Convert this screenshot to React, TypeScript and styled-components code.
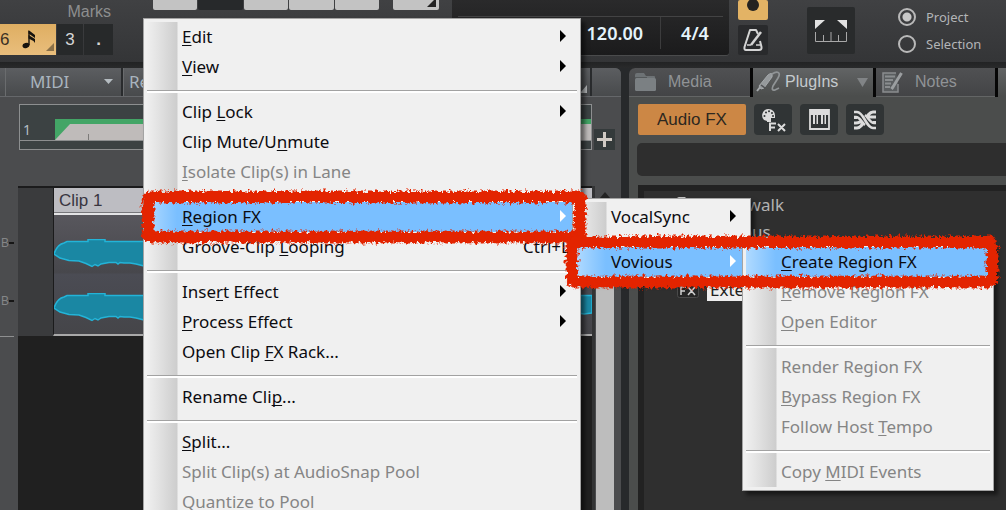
import React from "react";
import styled, { createGlobalStyle, css } from "styled-components";

const GlobalStyle = createGlobalStyle`
  *, *::before, *::after { box-sizing: border-box; }
  body { margin: 0; background: #27292b; font-family: "Noto Sans", "Open Sans", sans-serif; }
  button, input { font: inherit; margin: 0; padding: 0; border: 0; }
  ul { list-style: none; margin: 0; padding: 0; }
  svg { display: block; flex: none; }
`;

const sans = css`font-family: "Liberation Sans", Arial, sans-serif;`;

const Shell = styled.div`
  position: relative;
  display: flex;
  flex-direction: column;
  height: 100vh;
  overflow: hidden;
  background: #27292b;
`;

/* ---------- control bar ---------- */

const ControlBar = styled.header`
  display: flex;
  align-items: flex-start;
  flex: none;
  height: 68px;
  overflow: hidden;
  background: linear-gradient(#404143, #343537 62px, #222324 62px, #292a2b);
`;

const SnapGroup = styled.div`
  flex: none;
  width: 113px;
  margin-right: 40px;
`;

const SnapLabel = styled.div`
  ${sans}
  height: 24px;
  padding-right: 2px;
  font-size: 16px;
  line-height: 24px;
  text-align: right;
  color: #8d8e8f;
`;

const SnapRow = styled.div`
  ${sans}
  display: flex;
  gap: 1px;
  height: 31px;
  font-size: 17px;
`;

const SnapValue = styled.button`
  display: flex;
  align-items: center;
  gap: 13px;
  position: relative;
  width: 56px;
  background: linear-gradient(#dfae62, #e9be7c);
  color: #3a3024;
  text-align: left;
`;

const SnapCorner = styled.svg`
  position: absolute;
  right: 2px;
  bottom: 4px;
`;

const SnapCell = styled.button<{ $width: number; $bold?: boolean }>`
  width: ${(p) => p.$width}px;
  background: #27292a;
  color: #d6d6d6;
  font-weight: ${(p) => (p.$bold ? 700 : 400)};
`;

const ToolStrip = styled.div`
  display: flex;
  flex: none;
  gap: 1px;
  width: 226px;
  height: 10px;
  margin-right: 14px;
`;

const ToolButton = styled.button<{ $off?: boolean }>`
  flex: 1;
  border-radius: 0 0 2px 2px;
  background: ${(p) => (p.$off ? "#27292b" : "#c3c3c3")};
`;

const CornerButton = styled.button`
  display: flex;
  justify-content: flex-end;
  flex: none;
  width: 46px;
  height: 10px;
  margin-right: 13px;
  padding-right: 3px;
  border-radius: 0 0 2px 2px;
  background: #c3c3c3;
`;

const Transport = styled.div`
  flex: none;
  width: 277px;
  height: 55px;
  margin-right: 9px;
  padding: 16px 6px 6px;
  border-radius: 0 0 3px 3px;
  background: linear-gradient(#2a2a2b, #1b1b1c);
  box-shadow: 0 1px 0 #4a4b4c;
`;

const TransportReadout = styled.div`
  display: flex;
  justify-content: flex-end;
  height: 33px;
  border-top: 1px solid #434344;
  color: #e4f3fb;
  font-size: 18px;
  font-weight: 600;
  line-height: 32px;
`;

const Tempo = styled.span`
  padding-right: 17px;
  border-right: 1px solid #3c3c3d;
`;

const Meter = styled.span`
  width: 62px;
  padding-left: 6px;
  text-align: center;
`;

const ButtonColumn = styled.div`
  display: flex;
  flex-direction: column;
  flex: none;
  gap: 5px;
  width: 30px;
  margin-right: 39px;
`;

const SmallButton = styled.button<{ $lit?: boolean }>`
  display: flex;
  justify-content: center;
  align-items: ${(p) => (p.$lit ? "flex-start" : "center")};
  height: ${(p) => (p.$lit ? 20 : 30)}px;
  border-radius: 2px;
  background: ${(p) => (p.$lit ? "#e3b365" : "#292a2c")};
`;

const RulerButton = styled.button`
  display: flex;
  align-items: center;
  justify-content: center;
  flex: none;
  width: 48px;
  height: 47px;
  margin: 7px 43px 0 0;
  border-radius: 2px;
  background: #292b2c;
`;

const RadioGroup = styled.div`
  display: flex;
  flex-direction: column;
  gap: 3px;
  padding-top: 5px;
`;

const RadioLabel = styled.label`
  display: flex;
  align-items: center;
  gap: 10px;
  height: 24px;
  color: #b3b5b7;
  font-size: 13px;
`;

const Radio = styled.input`
  appearance: none;
  width: 18px;
  height: 18px;
  border: 2px solid #b9b9b9;
  border-radius: 50%;
  &:checked { background: radial-gradient(circle, #c8c8c8 4px, transparent 5px); }
`;

/* ---------- work area ---------- */

const Work = styled.div`
  display: flex;
  flex: 1;
  gap: 8px;
  min-height: 0;
`;

const TracksPanel = styled.main`
  display: flex;
  flex: 1;
  flex-direction: column;
  min-width: 0;
  border-radius: 0 6px 0 0;
  background: #4b4c4e;
  overflow: hidden;
`;

const MenuBar = styled.nav`
  display: flex;
  flex: none;
  height: 29px;
  padding-left: 5px;
  border-bottom: 1px solid #65676a;
  background: linear-gradient(#5c5e61, #484a4c);
`;

const MenuTab = styled.button<{ $grow?: boolean }>`
  display: flex;
  align-items: center;
  justify-content: space-between;
  width: ${(p) => (p.$grow ? "auto" : "118px")};
  flex: ${(p) => (p.$grow ? "1" : "none")};
  margin-right: ${(p) => (p.$grow ? 29 : 0)}px;
  padding: ${(p) => (p.$grow ? "0 3px 2px 6px" : "0 8px 2px 25px")};
  border-right: 2px solid #292b2d;
  box-shadow: inset 1px 0 #6a6c6e;
  background: transparent;
  color: #a9b4be;
  font-size: 17px;
`;

const TimelineRow = styled.div`
  display: flex;
  align-items: flex-end;
  flex: none;
  gap: 2px;
  height: 89px;
  padding: 7px 6px 36px 19px;
`;

const Timeline = styled.div`
  display: flex;
  flex: 1;
  height: 46px;
  padding: 14px 0 8px;
  border: 1px solid #8d8f90;
  background: #3c4243;
`;

const BarNumber = styled.span`
  width: 35px;
  padding-left: 3px;
  border-bottom: 1px solid #8d8f90;
  color: #b4bdc2;
  font-size: 14px;
  line-height: 22px;
`;

const LoopRange = styled.div`
  flex: 1;
  background: #bfbbba;
  border-top: 5px solid #43a566;
  border-bottom: 1px solid #8d8f90;
`;

const AddButton = styled.button`
  display: flex;
  align-items: center;
  justify-content: center;
  width: 21px;
  height: 21px;
  background: #343a3b;
`;

const TrackArea = styled.div`
  display: flex;
  flex: 1;
  min-height: 0;
`;

const DbScale = styled.div`
  ${sans}
  width: 18px;
  height: 151px;
  padding-top: 48px;
  color: #858688;
  font-size: 12px;
`;

const DbMark = styled.div`
  display: flex;
  align-items: center;
  justify-content: flex-end;
  height: 18px;
  margin-bottom: 40px;
  padding-right: 4px;
  &::after { content: ""; width: 5px; height: 2px; background: #161616; }
`;

const ScaleLine = styled.hr`
  width: 14px;
  height: 1px;
  margin: -14px 0 0;
  border: 0;
  background: #8e8f90;
`;

const Lanes = styled.div`
  flex: 1;
  min-width: 0;
  border-top: 2px solid #1b1b1c;
  background: #202020;
`;

const Lane = styled.div`
  display: flex;
  height: 148px;
  padding-left: 35px;
  background: #3a3b3d;
`;

const Clip = styled.article`
  flex: 1;
  min-width: 0;
  border-left: 1px solid #1b1b1c;
  border-bottom: 2px solid #a9a9a9;
`;

const ClipTitle = styled.h3`
  ${sans}
  height: 27px;
  margin: 0;
  padding-left: 5px;
  border-bottom: 2px solid #e4e4e6;
  background: #bdbdc2;
  box-shadow: inset 0 -1px #77777b;
  color: #39353f;
  font-size: 17px;
  font-weight: 400;
  line-height: 25px;
`;

const ClipBody = styled.div`
  display: flex;
  flex-direction: column;
  gap: 25px;
  height: 119px;
  padding-top: 24px;
  background: linear-gradient(#58575d, #47474c 58px, #4b4c54 59px, #454549);
`;

const ScrollBar = styled.div`
  display: flex;
  flex-direction: column;
  align-items: center;
  width: 29px;
  padding: 6px 7px 0 4px;
  gap: 6px;
  box-shadow: inset 3px 0 #333435;
`;

const ScrollThumb = styled.div`
  flex: 1;
  width: 18px;
  background: #bdbdbd;
`;

/* ---------- browser panel ---------- */

const Browser = styled.aside`
  display: flex;
  flex: none;
  flex-direction: column;
  width: 377px;
  border-radius: 6px 0 0 0;
  background: #4b4d4c;
  overflow: hidden;
`;

const BrowserTabs = styled.nav`
  display: flex;
  flex: none;
  gap: 3px;
  height: 29px;
  background: #060606;
`;

const BrowserTab = styled.button<{ $active?: boolean; $width: number }>`
  ${sans}
  display: flex;
  align-items: center;
  flex: none;
  width: ${(p) => p.$width}px;
  padding-left: ${(p) => (p.$active ? 3 : 6)}px;
  gap: ${(p) => (p.$active ? 4 : 12)}px;
  border-bottom: 1px solid ${(p) => (p.$active ? "#4b4d4c" : "#636565")};
  background: ${(p) => (p.$active ? "linear-gradient(#626465, #4b4d4c)" : "linear-gradient(#505153, #434446)")};
  color: ${(p) => (p.$active ? "#c5cacd" : "#909396")};
  font-size: 16px;
`;

const TabArrow = styled.svg`
  margin-left: 15px;
`;

const FilterRow = styled.div`
  display: flex;
  flex: none;
  gap: 8px;
  padding: 7px 9px 8px;
`;

const FilterButton = styled.button<{ $on?: boolean }>`
  ${sans}
  display: flex;
  align-items: center;
  justify-content: center;
  width: ${(p) => (p.$on ? 108 : 38)}px;
  height: 31px;
  border-radius: ${(p) => (p.$on ? 2 : 4)}px;
  background: ${(p) => (p.$on ? "#cc8745" : "#303435")};
  color: #2d2720;
  font-size: 17px;
`;

const SearchBox = styled.input`
  flex: none;
  height: 33px;
  margin: 0 0 9px 8px;
  border-radius: 5px 0 0 5px;
  background: #2e2e2e;
  color: #c0c0c0;
  outline: none;
`;

const Tree = styled.ul`
  flex: 1;
  margin-left: 9px;
  padding-left: 33px;
  border: solid #222222;
  border-width: 6px 0 0 6px;
  background: #2f2f2f;
  color: #b2b2b2;
  font-size: 17px;
`;

const TreeItem = styled.li<{ $after?: number }>`
  display: flex;
  align-items: center;
  gap: 8px;
  height: 27px;
  margin-bottom: ${(p) => p.$after ?? 0}px;
`;

const TreeText = styled.span<{ $selected?: boolean }>`
  padding: 0 3px;
  line-height: 22px;
  background: ${(p) => (p.$selected ? "#efefef" : "transparent")};
  color: ${(p) => (p.$selected ? "#222222" : "inherit")};
`;

/* ---------- context menus ---------- */

const Menu = styled.ul<{ $x: number; $y: number; $width: number }>`
  position: absolute;
  left: ${(p) => p.$x}px;
  top: ${(p) => p.$y}px;
  width: ${(p) => p.$width}px;
  padding: 3px;
  border: 1px solid #a3a3a3;
  background: #f0f0f0;
  box-shadow: 4px 4px 4px rgba(0, 0, 0, 0.5);
`;

const gutter = css`
  background: linear-gradient(90deg, #efefef, #e2e2e2 12px, #cdcdcd 30px, #f0f0f0 31px);
`;

const MenuRow = styled.button<{ $hot?: boolean }>`
  display: flex;
  align-items: center;
  width: 100%;
  height: 30px;
  padding: 0 11px 0 35px;
  ${gutter}
  ${(p) => p.$hot && css`background: linear-gradient(90deg, #b0daff, #7abfff 30px);`}
  color: #0c0c10;
  font-size: 17px;
  line-height: 24px;
  white-space: nowrap;
  text-align: left;
  &:disabled { color: #858585; }
  u { text-decoration-thickness: 1px; text-underline-offset: 2px; text-decoration-skip-ink: none; }
`;

const RowText = styled.span`
  flex: 1;
`;

const Shortcut = styled.span`
  width: 43px;
`;

const RowArrow = styled.svg`
  margin-bottom: 2px;
`;

const Separator = styled.li`
  height: 15px;
  padding-top: 8px;
  ${gutter}
  &::before {
    content: "";
    display: block;
    height: 3px;
    border-top: 1px solid #a2a2a2;
    background: #ffffff;
  }
`;

const Scribble = styled.svg<{ $x: number; $y: number }>`
  position: absolute;
  left: ${(p) => p.$x}px;
  top: ${(p) => p.$y}px;
  overflow: visible;
  pointer-events: none;
`;

type Entry = { text: string; off?: boolean; sub?: boolean; hot?: boolean; keys?: string } | "-";

const clipMenu: Entry[] = [
  { text: "_Edit", sub: true },
  { text: "_View", sub: true },
  "-",
  { text: "Clip _Lock", sub: true },
  { text: "Clip Mute/U_nmute" },
  { text: "_Isolate Clip(s) in Lane", off: true },
  "-",
  { text: "_Region FX", sub: true, hot: true },
  { text: "Groove-Clip _Looping", keys: "Ctrl+L" },
  "-",
  { text: "Inse_rt Effect", sub: true },
  { text: "_Process Effect", sub: true },
  { text: "Open Clip _FX Rack..." },
  "-",
  { text: "Rename Cli_p..." },
  "-",
  { text: "_Split..." },
  { text: "Split Clip(s) at AudioSnap Pool", off: true },
  { text: "Quantize to Pool", off: true },
];

const regionMenu: Entry[] = [
  { text: "VocalSync", sub: true },
  "-",
  { text: "Vovious", sub: true, hot: true },
];

const voviousMenu: Entry[] = [
  { text: "_Create Region FX", hot: true },
  { text: "_Remove Region FX", off: true },
  { text: "_Open Editor", off: true },
  "-",
  { text: "Render Region FX", off: true },
  { text: "_Bypass Region FX", off: true },
  { text: "Follow Host _Tempo", off: true },
  "-",
  { text: "Copy _MIDI Events", off: true },
];

function Mnemonic({ text }: { text: string }) {
  const at = text.indexOf("_");
  if (at < 0) return <>{text}</>;
  return (
    <>
      {text.slice(0, at)}
      <u>{text[at + 1]}</u>
      {text.slice(at + 2)}
    </>
  );
}

function ContextMenu({ items, x, y, width }: { items: Entry[]; x: number; y: number; width: number }) {
  return (
    <Menu role="menu" $x={x} $y={y} $width={width}>
      {items.map((item, i) =>
        item === "-" ? (
          <Separator key={i} role="separator" />
        ) : (
          <li key={i} role="none">
            <MenuRow role="menuitem" disabled={item.off} $hot={item.hot}>
              <RowText><Mnemonic text={item.text} /></RowText>
              {item.keys && <Shortcut>{item.keys}</Shortcut>}
              {item.sub && (
                <RowArrow width="6" height="12"><path d="M0 0L6 6L0 12Z" fill={item.hot ? "#fff" : "#000"} /></RowArrow>
              )}
            </MenuRow>
          </li>
        )
      )}
    </Menu>
  );
}

function Outline({ x, y, width, height, seed }: { x: number; y: number; width: number; height: number; seed: number }) {
  const id = `chalk${seed}`;
  return (
    <Scribble $x={x} $y={y} width={width} height={height} aria-hidden="true">
      <defs>
        <filter
          id={id}
          x="-10"
          y="-10"
          width={width + 20}
          height={height + 20}
          filterUnits="userSpaceOnUse"
          colorInterpolationFilters="sRGB"
        >
          <feTurbulence type="fractalNoise" baseFrequency="0.3" numOctaves="3" seed={seed} result="n" />
          <feDisplacementMap in="SourceGraphic" in2="n" scale="7" xChannelSelector="R" yChannelSelector="G" />
        </filter>
      </defs>
      <g filter={`url(#${id})`} fill="none" stroke="#e32400">
        <rect x="6" y="6" width={width - 12} height={height - 12} rx="2" strokeWidth="10" />
        <rect x="6" y="6" width={width - 12} height={height - 12} rx="2" strokeWidth="13" strokeDasharray="3 2 1 2 4 3" />
      </g>
    </Scribble>
  );
}

function Wave() {
  const edge =
    "M0 15C2 9 5 5 10 4L13 2.500H34V.5H51V2.500H538V20L530 21L524 20L505 24H120L110 28L90 27L82 25L76 24H70L66 23.500L64 25L62 23.500H55L47 25L44 27L41 25.500L38 27.500L32 24.500L25 22L15 21.500L6 19Z";
  return (
    <svg width="100%" height="29" viewBox="0 0 538 29" preserveAspectRatio="none">
      <path d={edge} fill="#1a87a3" stroke="#23b4d8" strokeWidth="1.500" />
    </svg>
  );
}

export default function App() {
  return (
    <Shell>
      <GlobalStyle />
      <ControlBar>
        <SnapGroup>
          <SnapLabel>Marks</SnapLabel>
          <SnapRow>
            <SnapValue>
              6
              <svg width="14" height="19" viewBox="0 0 14 19">
                <ellipse cx="4" cy="15.500" rx="3.600" ry="2.500" fill="#17130e" transform="rotate(-18 4 15.500)" />
                <path d="M7 15V1" stroke="#17130e" strokeWidth="1.400" />
                <path d="M6.500 0L13 5V8L6.500 3.500ZM6.500 5L13 9V13L11.500 11L6.500 8.500Z" fill="#17130e" />
              </svg>
              <SnapCorner width="8" height="8"><path d="M8 0V8H0Z" fill="#8a7048" /></SnapCorner>
            </SnapValue>
            <SnapCell $width={26}>3</SnapCell>
            <SnapCell $width={29} $bold>.</SnapCell>
          </SnapRow>
        </SnapGroup>
        <ToolStrip>
          <ToolButton aria-label="Smart tool" />
          <ToolButton aria-label="Select tool" $off />
          <ToolButton aria-label="Move tool" />
          <ToolButton aria-label="Edit tool" />
          <ToolButton aria-label="Draw tool" />
        </ToolStrip>
        <CornerButton aria-label="Tool options">
          <svg width="9" height="7"><path d="M9 -2V7H0Z" fill="#222" /></svg>
        </CornerButton>
        <Transport>
          <TransportReadout>
            <Tempo>120.00</Tempo>
            <Meter>4/4</Meter>
          </TransportReadout>
        </Transport>
        <ButtonColumn>
          <SmallButton $lit aria-label="Record mode">
            <svg width="14" height="12"><circle cx="7" cy="5" r="6" fill="#242220" /></svg>
          </SmallButton>
          <SmallButton aria-label="Metronome">
            <svg width="20" height="24" viewBox="0 0 20 24" fill="none" stroke="#d4d4d4" strokeWidth="2" strokeLinejoin="round">
              <path d="M15 6L13 2H7L1.500 19Q1 22 3 22H16Q19 22 18.500 19L17 13" />
              <path d="M4 17H8M13 17H17" strokeWidth="1.500" />
              <path d="M8 17L18 4" strokeWidth="2.500" />
            </svg>
          </SmallButton>
        </ButtonColumn>
        <RulerButton aria-label="Loop range">
          <svg width="32" height="22" viewBox="0 0 32 22">
            <path d="M0 0H10L0 9ZM32 0H22L32 9Z" fill="#e2e2e2" />
            <path d="M.5 12V21.500H31.500V12M8.500 15V21M16 12V21M23.500 15V21" fill="none" stroke="#a8a8a8" />
          </svg>
        </RulerButton>
        <RadioGroup>
          <RadioLabel><Radio type="radio" name="range" defaultChecked />Project</RadioLabel>
          <RadioLabel><Radio type="radio" name="range" />Selection</RadioLabel>
        </RadioGroup>
      </ControlBar>

      <Work>
        <TracksPanel>
          <MenuBar>
            <MenuTab>
              MIDI
              <svg width="9" height="5"><path d="M0 0H9L4.500 5Z" fill="#b5bcc1" /></svg>
            </MenuTab>
            <MenuTab $grow>
              Re
              <svg width="7" height="24"><path d="M7 16V24H0Z" fill="#b5b8ba" /></svg>
            </MenuTab>
          </MenuBar>
          <TimelineRow>
            <Timeline>
              <BarNumber>1</BarNumber>
              <LoopRange>
                <svg width="40" height="16"><path d="M0 0H15L0 16Z" fill="#43a566" /><path d="M33.500 10V16" stroke="#7c7a79" /></svg>
              </LoopRange>
            </Timeline>
            <AddButton aria-label="Add">
              <svg width="15" height="15"><path d="M7.500 0V15M0 7.500H15" stroke="#d0cac4" strokeWidth="3" /></svg>
            </AddButton>
          </TimelineRow>
          <TrackArea>
            <DbScale>
              <DbMark>B</DbMark>
              <DbMark>B</DbMark>
              <ScaleLine />
            </DbScale>
            <Lanes>
              <Lane>
                <Clip>
                  <ClipTitle>Clip 1</ClipTitle>
                  <ClipBody>
                    <Wave />
                    <Wave />
                  </ClipBody>
                </Clip>
              </Lane>
            </Lanes>
            <ScrollBar>
              <svg width="10" height="6"><path d="M0 6L5 0L10 6Z" fill="#232323" /></svg>
              <ScrollThumb />
            </ScrollBar>
          </TrackArea>
        </TracksPanel>

        <Browser>
          <BrowserTabs>
            <BrowserTab $width={121}>
              <svg width="21" height="18" viewBox="0 0 21 18">
                <path d="M0 2Q0 0 2 0H9L11 3H19Q20 3 20 4V5H0Z" fill="#6d7275" />
                <rect y="5" width="21" height="13" rx="1.500" fill="#7b8083" />
                <path d="M0 4.500H12" stroke="#54585a" />
              </svg>
              Media
            </BrowserTab>
            <BrowserTab $active $width={120}>
              <svg width="25" height="22" viewBox="0 0 25 22" fill="none">
                <path d="M1 20L5 15" stroke="#a5a9ab" strokeWidth="2" />
                <path d="M3 15L12 4Q17 0 16 6L8 17L5 18Z" fill="#969a9c" stroke="#a5a9ab" />
                <path d="M5 14L9 17" stroke="#505254" strokeWidth="1.500" />
                <path d="M16 3C22 -1 25 2 22 7L17 15Q15 20 19 19L23 17" stroke="#909496" strokeWidth="1.700" />
              </svg>
              PlugIns
              <TabArrow width="11" height="9"><path d="M0 0H11L5.500 9Z" fill="#818486" /></TabArrow>
            </BrowserTab>
            <BrowserTab $width={119}>
              <svg width="21" height="21" viewBox="0 0 21 21" fill="none" stroke="#8a8d8f">
                <path d="M14 1H1V20H16V12" fill="#5b5e60" strokeWidth="1.500" />
                <path d="M3 4.500H13M3 8H11M3 11.500H9M3 15H8" strokeWidth="1.800" />
                <path d="M19.500 1L11 15L9.500 17" strokeWidth="3" stroke="#9b9ea0" />
              </svg>
              Notes
            </BrowserTab>
            <BrowserTab $active $width={20} aria-label="More" />
          </BrowserTabs>
          <FilterRow>
            <FilterButton $on>Audio FX</FilterButton>
            <FilterButton aria-label="MIDI FX">
              <svg width="25" height="24" viewBox="0 0 25 24">
                <path d="M7.500 1A6.500 6.500 0 0 1 14 8V10H10V14H6V13L3 12A6.500 6.500 0 0 1 7.500 1Z" fill="#dcdcdc" />
                <g fill="#303435">
                  <circle cx="3.500" cy="8" r="1" /><circle cx="5" cy="4.500" r="1" /><circle cx="8" cy="3.200" r="1" />
                  <circle cx="11" cy="5" r="1" /><circle cx="12" cy="8" r="1" />
                </g>
                <path d="M9 23V15.500H15M9 19.500H14M17 16L24 23M24 16L17 23" fill="none" stroke="#dcdcdc" strokeWidth="2" />
              </svg>
            </FilterButton>
            <FilterButton aria-label="Instruments">
              <svg width="21" height="21" viewBox="0 0 21 21">
                <path d="M1 1H20V20H1Z" fill="none" stroke="#dcdcdc" strokeWidth="1.800" />
                <path d="M1 1H20V6H1ZM4 6H6V15H4ZM7.500 6H9V15H7.500ZM12 6H14V15H12ZM15.500 6H17V15H15.500Z" fill="#dcdcdc" />
              </svg>
            </FilterButton>
            <FilterButton aria-label="ReWire">
              <svg width="22" height="20" viewBox="0 0 22 20" fill="none" stroke="#dcdcdc" strokeWidth="3">
                <path d="M0 18H3C10 18 12 2 19 2H22M0 13H2C8 13 12 7 15 7H22M0 7.500H3M22 12.500H19" />
                <path d="M1 2H3C10 2 12 18 19 18H21" stroke="#303435" strokeWidth="6" />
                <path d="M0 2H3C10 2 12 18 19 18H22M0 7H2C6 7 8 13 11 15M11 5C14 7 16 13 20 13H22" strokeWidth="2.600" />
              </svg>
            </FilterButton>
          </FilterRow>
          <SearchBox type="search" aria-label="Search plug-ins" />
          <Tree>
            <TreeItem>
              <svg width="21" height="16" viewBox="0 0 21 16">
                <path d="M0 2Q0 0 2 0H8L10 2H19Q21 2 21 4V16H0Z" fill="#c4c4c4" />
                <path d="M0 4.500H21" stroke="#444" />
              </svg>
              <TreeText>Cakewalk</TreeText>
            </TreeItem>
            <TreeItem $after={31}>
              <svg width="21" height="16" viewBox="0 0 21 16"><path d="M0 2Q0 0 2 0H8L10 2H19Q21 2 21 4V16H0Z" fill="#c4c4c4" /></svg>
              <TreeText>Vovious</TreeText>
            </TreeItem>
            <TreeItem>
              <svg width="22" height="18" viewBox="0 0 22 18" fill="none">
                <rect x=".5" y=".5" width="21" height="16" rx="2" stroke="#4a4a4a" fill="#262626" />
                <path d="M4 14V6H9M4 10H8M11 6L18 14M18 6L11 14" stroke="#d0d0d0" strokeWidth="1.500" />
              </svg>
              <TreeText $selected>External Insert</TreeText>
            </TreeItem>
          </Tree>
        </Browser>
      </Work>

      <ContextMenu items={clipMenu} x={143} y={18} width={438} />
      <ContextMenu items={regionMenu} x={572} y={198} width={179} />
      <ContextMenu items={voviousMenu} x={742} y={243} width={252} />
      <Outline x={142} y={191} width={444} height={52} seed={3} />
      <Outline x={566} y={236} width={432} height={52} seed={8} />
    </Shell>
  );
}
